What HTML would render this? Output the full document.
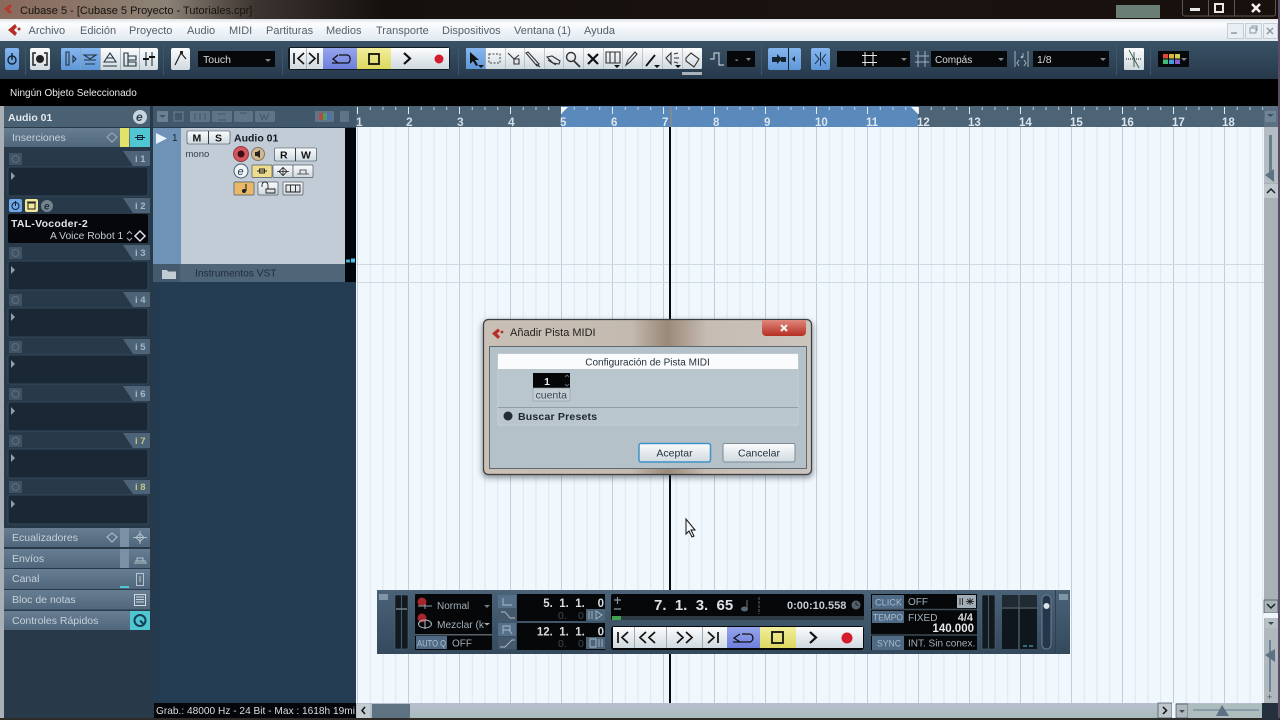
<!DOCTYPE html>
<html><head><meta charset="utf-8"><title>Cubase 5</title>
<style>
html,body{margin:0;padding:0;background:#000}
#p{position:relative;width:1280px;height:720px;overflow:hidden;background:#233c52;font-family:"Liberation Sans",sans-serif;filter:blur(.3px)}
#p>div{position:absolute}
#grid{left:356px;top:127px;width:908px;height:576px;background-color:#f0f7fd;
background-image:linear-gradient(90deg,#c2cdd7 1px,transparent 1px),linear-gradient(90deg,#dde6ed 1px,transparent 1px);
background-size:51px 100%,12.75px 100%;background-position:1px 0,1px 0}
#rul{left:356px;top:106px;width:908px;height:21px;background-color:#4d6376}
#rulsel{left:561px;top:106px;width:357px;height:21px;background:#5a8abb}
#ticks{left:356px;top:106px;width:908px;height:21px;
background-image:linear-gradient(90deg,#e4ebf0 1px,transparent 1px),linear-gradient(90deg,#c5d2dc 1px,transparent 1px);
background-size:51px 7px,12.75px 3px;background-repeat:repeat-x;background-position:1px 1px,1px 1px}
svg{position:absolute;left:0;top:0}
text{font-family:"Liberation Sans",sans-serif}
</style></head><body><div id="p">
<div id="grid"></div><div id="rul"></div><div id="rulsel"></div><div id="ticks"></div>
<svg width="1280" height="720" viewBox="0 0 1280 720">
<defs>
<linearGradient id="title" x1="0" x2="1" y1="0" y2="0"><stop offset="0" stop-color="#8a6a5c"/><stop offset=".13" stop-color="#8c8276"/><stop offset=".2" stop-color="#3c3430"/><stop offset=".3" stop-color="#15100e"/><stop offset=".7" stop-color="#1a120e"/><stop offset="1" stop-color="#17100d"/></linearGradient>
<linearGradient id="menu" x1="0" x2="0" y1="0" y2="1"><stop offset="0" stop-color="#dfe3e6"/><stop offset=".2" stop-color="#fdfdfe"/><stop offset="1" stop-color="#dfe8f0"/></linearGradient>
<linearGradient id="tb" x1="0" x2="0" y1="0" y2="1"><stop offset="0" stop-color="#3a5266"/><stop offset="1" stop-color="#26394b"/></linearGradient>
<linearGradient id="wb" x1="0" x2="0" y1="0" y2="1"><stop offset="0" stop-color="#fbfcfd"/><stop offset="1" stop-color="#cfd9df"/></linearGradient>
<linearGradient id="yb" x1="0" x2="0" y1="0" y2="1"><stop offset="0" stop-color="#f2ee9c"/><stop offset="1" stop-color="#dcd75e"/></linearGradient>
<linearGradient id="bb" x1="0" x2="0" y1="0" y2="1"><stop offset="0" stop-color="#96a5ec"/><stop offset="1" stop-color="#6d7fdc"/></linearGradient>
<linearGradient id="lb" x1="0" x2="0" y1="0" y2="1"><stop offset="0" stop-color="#86b6ee"/><stop offset="1" stop-color="#5f97d8"/></linearGradient>
<linearGradient id="row" x1="0" x2="0" y1="0" y2="1"><stop offset="0" stop-color="#667d92"/><stop offset="1" stop-color="#4f667b"/></linearGradient>
<linearGradient id="dlgt" x1="0" x2="1" y1="0" y2="0"><stop offset="0" stop-color="#c8bfb5"/><stop offset=".45" stop-color="#c4bab0"/><stop offset=".56" stop-color="#9a8977"/><stop offset=".68" stop-color="#c6bcb2"/><stop offset="1" stop-color="#cbc5be"/></linearGradient>
<linearGradient id="red" x1="0" x2="0" y1="0" y2="1"><stop offset="0" stop-color="#e0877c"/><stop offset="1" stop-color="#b52f22"/></linearGradient>
<linearGradient id="trans" x1="0" x2="0" y1="0" y2="1"><stop offset="0" stop-color="#4a6278"/><stop offset="1" stop-color="#34495c"/></linearGradient>
<linearGradient id="sb" x1="0" x2="0" y1="0" y2="1"><stop offset="0" stop-color="#b8bfce"/><stop offset="1" stop-color="#a9bcbc"/></linearGradient>
<filter id="sh" x="-10%" y="-10%" width="120%" height="120%"><feGaussianBlur stdDeviation="3"/></filter>
</defs>

<!-- title bar -->
<rect width="1280" height="19" fill="url(#title)"/>
<rect x="1116" y="5" width="44" height="13" fill="#7f9a90" opacity=".8"/>
<path d="M4 9l6-5 2 2-3 3 3 3-2 2z" fill="#b8382e"/>
<text x="20" y="14" font-size="11" fill="#16120f">Cubase 5 - [Cubase 5 Proyecto - Tutoriales.cpr]</text>
<rect x="1182.500" y="-2" width="93" height="18" rx="2" fill="none" stroke="#5c5550"/>
<path d="M1208.500 0v16M1234.500 0v16" stroke="#5c5550"/>
<rect x="1190" y="8" width="10" height="3" fill="#e8e8e8"/>
<rect x="1215" y="4" width="8" height="8" fill="none" stroke="#e8e8e8" stroke-width="2"/>
<path d="M1252 4l8 8M1260 4l-8 8" stroke="#eee" stroke-width="2.600"/>

<!-- menu -->
<rect y="19" width="1280" height="22" fill="url(#menu)"/>
<path d="M8 30l7-6 2 3-3 3 3 3-2 3z" fill="#b52e2a"/><circle cx="19" cy="29" r="1.500" fill="#b52e2a"/>
<g font-size="11" fill="#55616b">
<text x="28.500" y="34">Archivo</text><text x="80" y="34">Edición</text><text x="129" y="34">Proyecto</text><text x="187" y="34">Audio</text><text x="229" y="34">MIDI</text><text x="266" y="34">Partituras</text><text x="326" y="34">Medios</text><text x="376" y="34">Transporte</text><text x="442" y="34">Dispositivos</text><text x="514" y="34">Ventana (1)</text><text x="584" y="34">Ayuda</text></g>
<g fill="#e9eff3" stroke="#c4ced6"><rect x="1227.500" y="23.500" width="16" height="15"/><rect x="1245.500" y="23.500" width="16" height="15"/><rect x="1263.500" y="23.500" width="14" height="15"/></g>
<path d="M1231 33h6" stroke="#8a99a5" stroke-width="1.500"/><path d="M1250 28h6v5h-6zM1252 28v-2h5v5" fill="none" stroke="#8a99a5"/><path d="M1267 28l6 6M1273 28l-6 6" stroke="#8a99a5" stroke-width="1.500"/>

<!-- toolbar -->
<rect y="41" width="1280" height="38" fill="url(#tb)"/>
<rect y="79" width="1280" height="27" fill="#000"/>
<text x="10" y="96" font-size="10" fill="#e8e8e8">Ningún Objeto Seleccionado</text>
<path d="M25.500 45v30M163.500 45v30M282.500 45v30M458.500 45v30M761.500 45v30M1116.500 45v30M1150.500 45v30" stroke="#3f566a"/>
<rect x="5" y="48" width="14" height="22" rx="2" fill="url(#lb)"/><circle cx="12" cy="60" r="4" fill="none" stroke="#123" stroke-width="1.400"/><path d="M12 53v7" stroke="#123" stroke-width="1.400"/>
<rect x="30" y="48" width="20" height="22" rx="2" fill="url(#wb)"/><path d="M36 53h-3v12h3M44 53h3v12h-3" fill="none" stroke="#222" stroke-width="1.500"/><circle cx="40" cy="59" r="4" fill="#222"/>
<rect x="61" y="48" width="97" height="22" rx="2" fill="url(#wb)"/><path d="M61 50a2 2 0 0 1 2-2h37v22H63a2 2 0 0 1-2-2z" fill="url(#lb)"/>
<path d="M80.500 48v22M120.500 48v22M139.500 48v22M100.500 48v22" stroke="#8ea2b2" opacity=".7"/>
<g fill="none" stroke="#24333f" stroke-width="1.100"><path d="M66 52h3v13h-3zM73 56l3 3-3 3z"/><path d="M84 55h12l-6 4zM84 60h12M85 64h10"/><path d="M104 62l6-9 6 9zM103 66h14M106 58h8"/><path d="M124 53h4v13h-4zM128 56h8v4h-8zM128 62h8v4h-8z"/><path d="M146 52v14M152 52v14"/></g><path d="M143 59h6M149 57h6" stroke="#111" stroke-width="2"/>
<rect x="171" y="48" width="19" height="22" rx="2" fill="url(#wb)"/><path d="M175 65l6-12 5 6" fill="none" stroke="#222" stroke-width="1.200"/><rect x="180" y="51" width="3" height="3" fill="#222"/>
<rect x="198" y="51" width="77" height="16" fill="#06080a"/><text x="203" y="63" font-size="10.500" fill="#d5dadd">Touch</text><path d="M265 59h6l-3 3z" fill="#7b8790"/>
<!-- transport group -->
<rect x="288" y="47" width="162" height="23" rx="3" fill="#101a22"/>
<rect x="290" y="48" width="33" height="21" fill="url(#wb)"/><rect x="323" y="48" width="34" height="21" fill="url(#bb)"/><rect x="357" y="48" width="34" height="21" fill="url(#yb)"/><rect x="391" y="48" width="34" height="21" fill="url(#wb)"/><rect x="425" y="48" width="24" height="21" fill="url(#wb)"/>
<path d="M306.500 48v21" stroke="#aab6bf"/>
<path d="M294 53v11M304 53l-6 5.500 6 5.500M309 53l6 5.500-6 5.500M318 53v11" fill="none" stroke="#111" stroke-width="1.600"/>
<path d="M332 63h16c3-1 3-8-1-8h-8M338 55l-5 4 5 4" fill="none" stroke="#111" stroke-width="1.300"/>
<rect x="369" y="54" width="10" height="10" fill="none" stroke="#111" stroke-width="1.800"/>
<path d="M404 53l6 5.500-6 5.500" fill="none" stroke="#111" stroke-width="2.200"/>
<circle cx="439" cy="59" r="4.500" fill="#d51c2e"/>
<!-- tools -->
<rect x="466" y="48" width="236" height="21" rx="1" fill="url(#wb)"/><rect x="466" y="48" width="20" height="21" fill="url(#lb)"/>
<path d="M485.500 48v21M505.500 48v21M524.500 48v21M544.500 48v21M563.500 48v21M583.500 48v21M603.500 48v21M622.500 48v21M642.500 48v21M662.500 48v21M682.500 48v21" stroke="#a9b6c0" opacity=".7"/>
<path d="M470 52v12l3-3 3 5 2-1-3-5h4z" fill="#111"/><path d="M478 65h6l-3 3z" fill="#111"/>
<rect x="489" y="54" width="11" height="9" fill="none" stroke="#444" stroke-dasharray="2 1.500"/>
<g fill="none" stroke="#333" stroke-width="1.100"><path d="M508 53l6 6M514 59h5v5h-5zM519 55l-5 4"/><path d="M526 53l11 13 2-2-11-12zM536 64l4 3"/><path d="M547 57l5-1 8 5-1 3-6-1zM548 60l8 5"/><circle cx="571" cy="57" r="4.500" stroke-width="1.400"/><path d="M574 61l6 6" stroke-width="1.800"/><path d="M606 52h14v11h-14zM610 52v11M615 52v11"/><path d="M626 65l2-5 7-8 2 2-7 8z"/><path d="M666 58l5-5v11zM674 54l4-1M674 58h5M674 62l4 1"/><path d="M686 58l5-5 8 6-5 8-8-6z"/></g>
<path d="M588 54l10 10M598 54l-10 10" stroke="#111" stroke-width="2.200"/>
<path d="M646 66l9-11" stroke="#111" stroke-width="1.800"/><path d="M654 65h6l-3 3zM675 65h6l-3 3zM614 65h6l-3 3z" fill="#111"/>
<rect x="682" y="72" width="20" height="3" fill="#aab3ba"/>
<path d="M710 59h4v-6h5v12h5" fill="none" stroke="#b9c6d0" stroke-width="1.200"/>
<rect x="727" y="51" width="28" height="16" fill="#06080a"/><text x="735" y="63" font-size="10" fill="#ddd">-</text><path d="M746 58h5l-2.500 3z" fill="#7b8790"/>
<rect x="768" y="48" width="33" height="22" rx="2" fill="url(#lb)"/><path d="M788.500 48v22" stroke="#122"/>
<path d="M772 57h5v5h-5zM777 54l5 5-5 5zM781 57h5v5h-5zM795 56l-3 3 3 3z" fill="#16242f"/>
<rect x="811" y="48" width="19" height="22" rx="2" fill="url(#lb)"/><path d="M815 54l4 5-4 5M826 54l-4 5 4 5M820.500 52v14" fill="none" stroke="#1a2f40" stroke-width="1"/>
<rect x="837" y="51" width="73" height="16" fill="#06080a"/><path d="M865 52v14M873 52v14M862 55.500h15M862 62.500h15" stroke="#e4e4e4" stroke-width="1.100"/><path d="M901 58h6l-3 3z" fill="#7b8790"/>
<path d="M918 51v16M925 51v16M915 56h14M915 62h14" stroke="#9fb0bd"/>
<rect x="931" y="51" width="76" height="16" fill="#06080a"/><text x="935" y="63" font-size="10" fill="#d5dadd">Compás</text><path d="M998 58h6l-3 3z" fill="#7b8790"/>
<path d="M1015 51v16M1028 51v16M1019 60l-2 3 2 3M1024 60l2 3-2 3M1023 53v4" fill="none" stroke="#9fb0bd"/><circle cx="1022" cy="57" r="1.300" fill="#9fb0bd"/>
<rect x="1033" y="51" width="76" height="16" fill="#06080a"/><text x="1037" y="63" font-size="10.500" fill="#d5dadd">1/8</text><path d="M1100 58h6l-3 3z" fill="#7b8790"/>
<rect x="1124" y="48" width="20" height="22" rx="1" fill="url(#wb)"/><path d="M1129 50l10 18M1134 52v15" stroke="#465" fill="none"/><path d="M1126 59h16" stroke="#111" stroke-dasharray="1 1"/>
<rect x="1158" y="51" width="31" height="16" fill="#06080a"/>
<rect x="1163" y="54" width="5" height="4.500" fill="#e0493a"/><rect x="1169" y="54" width="5" height="4.500" fill="#e2b13a"/><rect x="1175" y="54" width="5" height="4.500" fill="#cfd24a"/><rect x="1163" y="59.500" width="5" height="4.500" fill="#3ec07a"/><rect x="1169" y="59.500" width="5" height="4.500" fill="#3f9fdc"/><rect x="1175" y="59.500" width="5" height="4.500" fill="#8a5fd0"/><path d="M1181 58h6l-3 3z" fill="#7b8790"/>

<!-- inspector -->
<rect x="0" y="106" width="4" height="614" fill="#a8b0b5"/>
<rect x="4" y="106" width="150" height="614" fill="#283a4a"/>
<rect x="4" y="106" width="146" height="21" fill="#4a6073"/>
<text x="8" y="121" font-size="10.500" font-weight="bold" fill="#e4eaee">Audio 01</text>
<circle cx="140" cy="117" r="7" fill="#c8d4de"/><text x="136" y="121" font-size="12" font-style="italic" font-weight="bold" fill="#2f4558">e</text>
<rect x="4" y="128" width="146" height="19" fill="url(#row)"/><rect x="120" y="128" width="9" height="19" fill="#e3e36a"/><rect x="130" y="128" width="20" height="19" fill="#4fc6d2"/>
<text x="12" y="141" font-size="10.500" fill="#c6d2dc">Inserciones</text>
<path d="M107 137l5-4 5 4-5 5z" fill="none" stroke="#9fb0be"/><path d="M135 137.500h10M137.500 135.500h5v4h-5z" fill="none" stroke="#123" stroke-width=".9"/>

<!-- slots -->
<g stroke="#34495c">
<rect x="8" y="167" width="140" height="29" rx="2" fill="#1a2836"/>
<rect x="8" y="261" width="140" height="29" rx="2" fill="#1a2836"/>
<rect x="8" y="308" width="140" height="29" rx="2" fill="#1a2836"/>
<rect x="8" y="355" width="140" height="29" rx="2" fill="#1a2836"/>
<rect x="8" y="402" width="140" height="29" rx="2" fill="#1a2836"/>
<rect x="8" y="449" width="140" height="29" rx="2" fill="#1a2836"/>
<rect x="8" y="495" width="140" height="29" rx="2" fill="#1a2836"/>
</g>
<rect x="8" y="214" width="140" height="29" rx="2" fill="#05070a"/>
<g fill="#4d6377">
<path d="M123 151h27v15h-17zM123 198h27v15h-17zM123 245h27v15h-17zM123 292h27v15h-17zM123 339h27v15h-17zM123 386h27v15h-17zM123 433h27v15h-17zM123 480h27v14h-17z"/></g>
<g fill="#3f5364">
<rect x="9" y="153" width="13" height="12"/><rect x="9" y="247" width="13" height="12"/><rect x="9" y="294" width="13" height="12"/><rect x="9" y="341" width="13" height="12"/><rect x="9" y="388" width="13" height="12"/><rect x="9" y="435" width="13" height="12"/><rect x="9" y="481" width="13" height="12"/></g>
<g fill="none" stroke="#5c7082"><circle cx="15.500" cy="159" r="3.500"/><circle cx="15.500" cy="253" r="3.500"/><circle cx="15.500" cy="300" r="3.500"/><circle cx="15.500" cy="347" r="3.500"/><circle cx="15.500" cy="394" r="3.500"/><circle cx="15.500" cy="441" r="3.500"/><circle cx="15.500" cy="487" r="3.500"/></g>
<path d="M11 172l4 4-4 4zM11 266l4 4-4 4zM11 313l4 4-4 4zM11 360l4 4-4 4zM11 407l4 4-4 4zM11 454l4 4-4 4zM11 500l4 4-4 4z" fill="#8ea0ae"/>
<g font-size="9.500" font-weight="bold" fill="#a7b8c5"><text x="135" y="162">i 1</text><text x="135" y="209">i 2</text><text x="135" y="256">i 3</text><text x="135" y="303">i 4</text><text x="135" y="350">i 5</text><text x="135" y="397">i 6</text></g>
<g font-size="9.500" font-weight="bold" fill="#c4c67e"><text x="135" y="444">i 7</text><text x="135" y="490">i 8</text></g>
<rect x="9" y="199" width="13" height="13" rx="2" fill="#6fa6e8"/><circle cx="15.500" cy="206" r="3.500" fill="none" stroke="#123"/><path d="M15.500 201v5" stroke="#123"/>
<rect x="25" y="199" width="13" height="13" rx="2" fill="#efe79a"/><path d="M28 203h7v6h-7zM27 202h9" fill="none" stroke="#222"/>
<circle cx="47" cy="206" r="6" fill="#74848f"/><text x="44" y="209.500" font-size="10" font-style="italic" font-weight="bold" fill="#22313d">e</text>
<text x="11" y="227" font-size="10.500" font-weight="bold" letter-spacing=".25" fill="#dfe5e9">TAL-Vocoder-2</text>
<text x="50" y="239" font-size="10.300" fill="#c4ccd3">A Voice Robot 1</text>
<path d="M127 234l2.500-2.500 2.500 2.500M127 238l2.500 2.500 2.500-2.500" fill="none" stroke="#aab"/><path d="M140 231l5 5-5 5-5-5z" fill="none" stroke="#dde" stroke-width="1.500"/>

<!-- bottom sections -->
<g font-size="10.500" fill="#c6d2dc">
<rect x="4" y="528" width="146" height="19" fill="url(#row)"/><rect x="120" y="528" width="9" height="19" fill="#7b90a4"/><text x="12" y="541">Ecualizadores</text>
<rect x="4" y="549" width="146" height="19" fill="url(#row)"/><rect x="120" y="549" width="9" height="19" fill="#7b90a4"/><text x="12" y="562">Envíos</text>
<rect x="4" y="569" width="146" height="20" fill="url(#row)"/><rect x="120" y="586" width="9" height="2" fill="#4fc6d2"/><text x="12" y="582">Canal</text>
<rect x="4" y="590" width="146" height="19.500" fill="url(#row)"/><text x="12" y="603">Bloc de notas</text>
<rect x="4" y="611" width="146" height="19" fill="url(#row)"/><rect x="130" y="611" width="20" height="19" fill="#4fc6d2"/><text x="12" y="624">Controles Rápidos</text>
</g>
<path d="M107 537l5-4 5 4-5 5z" fill="none" stroke="#b6c4cf"/><path d="M136 537.500l4-4 4 4-4 4zM140 531v13M133 537.500h14" fill="none" stroke="#b6c4cf" stroke-width=".9"/>
<path d="M135 561h11M137 561v-3h6v3M134 563h13" fill="none" stroke="#b6c4cf"/>
<rect x="136.500" y="573.500" width="7" height="12" fill="none" stroke="#b6c4cf"/><path d="M140 576v6" stroke="#b6c4cf"/>
<rect x="134.500" y="594.500" width="11" height="11" fill="none" stroke="#cdd8e0"/><path d="M136 597h8M136 599.500h8M136 602h8" stroke="#cdd8e0"/>
<circle cx="140" cy="620.500" r="5.500" fill="none" stroke="#173f55" stroke-width="2"/><path d="M140 620.500l4 4" stroke="#173f55" stroke-width="2"/>

<!-- track list -->
<rect x="154" y="127" width="202" height="576" fill="#233c52"/>
<rect x="153" y="106" width="203" height="21" fill="#41586b"/>
<rect x="157" y="111" width="11" height="11" rx="1" fill="#6d8192"/><path d="M159 115h7l-3.500 3z" fill="#41586b"/>
<rect x="174" y="112" width="9" height="9" fill="none" stroke="#6d8192"/>
<g fill="#5f7486"><rect x="190" y="111" width="20" height="11" rx="1"/><rect x="212" y="111" width="20" height="11" rx="1"/><rect x="234" y="111" width="19" height="11" rx="1"/><rect x="255" y="111" width="20" height="11" rx="1"/><rect x="315" y="111" width="19" height="11" rx="1"/><rect x="340" y="111" width="9" height="11" rx="1"/></g>
<path d="M195 120v-7M205 120v-7M200 113v7M218 114h8M218 120h8M240 113h7M260 113l2 7 2-5 2 5 3-7" stroke="#41586b" fill="none"/>
<rect x="319" y="113" width="4" height="7" fill="#b14c44"/><rect x="323" y="113" width="4" height="7" fill="#4e9a63"/><rect x="327" y="113" width="4" height="7" fill="#4a70b5"/>
<rect x="153" y="128" width="28" height="136" fill="#6f93b7"/><rect x="181" y="128" width="164" height="136" fill="#c1ccd6"/>
<rect x="345" y="128" width="11" height="154" fill="#03060a"/>
<rect x="346" y="259.500" width="4" height="3" fill="#3fb0d0"/><rect x="351" y="258.500" width="4" height="4" fill="#45c6e0"/>
<path d="M156 133l11 5.500-11 5.500z" fill="#e8f2fb"/><text x="172" y="141" font-size="10" fill="#142634">1</text>
<rect x="187" y="131" width="43" height="13" rx="1.500" fill="url(#wb)" stroke="#33424f" stroke-width=".6"/><path d="M208.500 131v13" stroke="#33424f"/>
<text x="192.500" y="141.500" font-size="10.500" font-weight="bold" fill="#111">M</text><text x="215" y="141.500" font-size="10.500" font-weight="bold" fill="#111">S</text>
<text x="234" y="141.500" font-size="10.500" font-weight="bold" fill="#101a22">Audio 01</text>
<text x="185.500" y="157" font-size="9.500" fill="#2f3f4b">mono</text>
<circle cx="241" cy="154" r="7.500" fill="#d9555e" stroke="#8d3c40"/><circle cx="241" cy="154" r="3.500" fill="#3a1014"/>
<circle cx="258" cy="154" r="6.500" fill="#d2b98f" stroke="#83765f"/><path d="M255 152h2l3-2v8l-3-2h-2z" fill="#222"/>
<rect x="274.500" y="148" width="42" height="13" rx="1.500" fill="url(#wb)" stroke="#33424f" stroke-width=".6"/><path d="M295.500 148v13" stroke="#33424f"/>
<text x="280" y="158.500" font-size="10.500" font-weight="bold" fill="#111">R</text><text x="301" y="158.500" font-size="10.500" font-weight="bold" fill="#111">W</text>
<circle cx="241" cy="171" r="7" fill="#eef3f6" stroke="#47596a"/><text x="237.500" y="175" font-size="11" font-style="italic" fill="#1f3344">e</text>
<rect x="252" y="165" width="20" height="12.500" rx="1" fill="#efdd8f" stroke="#4e5a63" stroke-width=".7"/><path d="M257 171h10M259.500 169h5v4h-5z" fill="none" stroke="#222" stroke-width=".9"/>
<rect x="273" y="165" width="20" height="12.500" rx="1" fill="url(#wb)" stroke="#4e5a63" stroke-width=".7"/><path d="M283 167v9M279 171.500l4-4 4 4-4 4zM277 171.500h12" fill="none" stroke="#222" stroke-width=".8"/>
<rect x="293" y="165" width="20" height="12.500" rx="1" fill="url(#wb)" stroke="#4e5a63" stroke-width=".7"/><path d="M297 174h12M300 174v-4h6v4" fill="none" stroke="#333" stroke-width=".8"/>
<rect x="234" y="182" width="20" height="13" rx="1" fill="#e9b967" stroke="#4e5a63" stroke-width=".7"/><path d="M246 184v7" stroke="#222" stroke-width="1.100"/><circle cx="244" cy="191" r="2" fill="#222"/>
<rect x="258" y="182" width="20" height="13" rx="1" fill="url(#wb)" stroke="#4e5a63" stroke-width=".7"/><path d="M266 189h9v4h-9zM262 187v-2a3 3 0 0 1 6 0v4" fill="none" stroke="#222" stroke-width=".9"/>
<rect x="283" y="182" width="20" height="13" rx="1" fill="url(#wb)" stroke="#4e5a63" stroke-width=".7"/><path d="M286 185h14v7h-14zM290.500 185v7M295.500 185v7" fill="none" stroke="#222" stroke-width=".9"/>
<rect x="153" y="264" width="192" height="18" fill="#4f6578"/><rect x="153" y="264" width="27" height="18" fill="#455a6d"/>
<path d="M162 270h5l1 1.500h8V279h-14z" fill="#c2ccd4"/>
<text x="195" y="276.500" font-size="10.200" fill="#1f2e3a">Instrumentos VST</text>

<!-- ruler text -->
<g font-size="12" font-weight="bold" fill="#cfdbe5">
<text x="356" y="126">1</text><text x="406" y="126">2</text><text x="457" y="126">3</text><text x="508" y="126">4</text></g>
<g font-size="11.500" font-weight="bold" fill="#dbe6ef">
<text x="560" y="126">5</text><text x="611" y="126">6</text><text x="662" y="126">7</text><text x="713" y="126">8</text><text x="764" y="126">9</text><text x="815" y="126">10</text><text x="866" y="126">11</text><text x="917" y="126">12</text><text x="968" y="126">13</text><text x="1019" y="126">14</text><text x="1070" y="126">15</text><text x="1121" y="126">16</text><text x="1172" y="126">17</text><text x="1222" y="126">18</text></g>
<path d="M561 107h7l-7 7zM918 107h-7l7 7z" fill="#f4f7fa"/>
<rect x="1264" y="106" width="14" height="21" fill="#5b7083"/><rect x="1265" y="111" width="11" height="11" fill="#6f8496"/><path d="M1267 114h7l-3.500 3z" fill="#3d5162"/>

<!-- horizontal grid -->
<path d="M356 264.500h908M356 282.500h908" stroke="#d0dae2"/>
<!-- cursor -->
<rect x="669" y="127" width="2" height="576" fill="#060a0d"/>
<rect x="670" y="106" width="2" height="21" fill="#7f8a94"/>

<!-- right scroll -->
<rect x="1264" y="127" width="14" height="576" fill="#a8b1b6"/>
<rect x="1264" y="127" width="14" height="56" fill="#b2bcc2"/>
<path d="M1270.500 135v40" stroke="#6c7e8c" stroke-width="3"/><path d="M1265 175l9-6v13z" fill="#5d7182"/>
<rect x="1264" y="184" width="14" height="14" fill="#bec7cc"/><path d="M1267 193l4-4 4 4" fill="none" stroke="#16222c" stroke-width="1.500"/>
<rect x="1264" y="600" width="14" height="13" fill="#aab3b8" stroke="#2a3a47" stroke-width=".6"/><path d="M1267 604l4 4 4-4" fill="none" stroke="#16222c" stroke-width="1.500"/>
<rect x="1264" y="613" width="14" height="5" fill="#eef5fb"/>
<rect x="1264" y="618" width="14" height="85" fill="#aeb8bd"/><rect x="1265" y="618" width="12" height="10" fill="#b7c1c6"/><path d="M1268 622h6l-3 3z" fill="#3a4c5a"/>
<path d="M1270 640v52" stroke="#6f8392" stroke-width="2"/><path d="M1265 655l10-6v13z" fill="#5d7182"/>
<text x="1267" y="700" font-size="9" fill="#46596a">+</text>
<rect x="1278" y="0" width="2" height="720" fill="#5b4c66"/>

<!-- bottom bar -->
<rect x="356" y="703" width="908" height="15" fill="url(#sb)"/>
<rect y="718" width="1280" height="2" fill="#2e2a26"/>
<rect x="154" y="703" width="202" height="15" fill="#04060a"/>
<text x="156" y="714" font-size="10.500" fill="#d8dde0" textLength="199" lengthAdjust="spacingAndGlyphs">Grab.: 48000 Hz - 24 Bit - Max : 1618h 19mi</text>
<rect x="357" y="704" width="13" height="14" fill="#c2ccd1"/><path d="M365 707l-3 3.500 3 3.500" fill="none" stroke="#111" stroke-width="1.500"/>
<rect x="372" y="704" width="38" height="14" fill="#5e7282"/>
<rect x="1158" y="703" width="14" height="15" fill="#bcc6cb" stroke="#2a3a47" stroke-width=".6"/><path d="M1163 707l3.500 3.500-3.500 3.500" fill="none" stroke="#111" stroke-width="1.500"/>
<rect x="1172" y="703" width="4" height="15" fill="#f0f7fd"/>
<rect x="1176" y="704" width="12" height="14" fill="#aeb8bd" stroke="#2a3a47" stroke-width=".6"/><path d="M1179 710h6l-3 3z" fill="#3a4c5a"/>
<rect x="1188" y="704" width="74" height="14" fill="#adbcbc"/><path d="M1193 710h66" stroke="#8a9ba8" stroke-width="2"/><path d="M1216 716l6-11 7 11z" fill="#5d7182"/>
<rect x="1262" y="703" width="16" height="17" fill="#24313c"/>

<!-- dialog -->
<rect x="482" y="321" width="331" height="157" rx="6" fill="#25313a" opacity=".5" filter="url(#sh)"/>
<rect x="483.500" y="319.500" width="328" height="155" rx="5" fill="url(#dlgt)" stroke="#3d3e40" stroke-width="1.200"/>
<path d="M492 333.500l6-5 2 2.500-3 2.500 3 3-2 2.500z" fill="#b52e2a"/><circle cx="502" cy="332" r="1.400" fill="#b52e2a"/>
<text x="510" y="336" font-size="11" fill="#24221f">Añadir Pista MIDI</text>
<path d="M762 320h44v12a4 4 0 0 1-4 4h-36a4 4 0 0 1-4-4z" fill="url(#red)"/>
<path d="M781 325l6 6M787 325l-6 6" stroke="#f4f0ee" stroke-width="2.200"/>
<rect x="489.500" y="346.500" width="317" height="122" fill="#b4c1c8" stroke="#5e6a72"/>
<rect x="498" y="354" width="300" height="71" fill="#b9c6cd" stroke="#c5d0d6"/>
<rect x="498" y="354" width="300" height="15" fill="#f9fbfc"/>
<text x="647.500" y="365.500" font-size="10" text-anchor="middle" fill="#26323a">Configuración de Pista MIDI</text>
<rect x="533" y="373" width="37" height="15" fill="#040608"/><text x="547" y="385" font-size="10.500" font-weight="bold" fill="#eee" text-anchor="middle">1</text>
<path d="M565 377l2-2 2 2M565 384l2 2 2-2" stroke="#667" fill="none"/>
<rect x="533" y="388" width="37" height="13" fill="#c2ccd2" stroke="#8e9ca5" stroke-width=".6"/>
<text x="535.500" y="398.500" font-size="10.500" fill="#3a4a55">cuenta</text>
<path d="M498 407.500h300" stroke="#8f9da6"/>
<circle cx="508" cy="416" r="4.500" fill="#222d36"/>
<text x="518" y="420" font-size="10.500" font-weight="bold" letter-spacing=".2" fill="#1c2630">Buscar Presets</text>
<rect x="639" y="443.500" width="71.500" height="18.500" rx="2" fill="url(#wb)" stroke="#3f92c8" stroke-width="1.500"/>
<rect x="723" y="443.500" width="72" height="18.500" rx="2" fill="url(#wb)" stroke="#7f8a92"/>
<text x="674.500" y="456.500" font-size="10.500" text-anchor="middle" fill="#27333c">Aceptar</text>
<text x="759" y="456.500" font-size="10.500" text-anchor="middle" fill="#27333c">Cancelar</text>

<!-- transport panel -->
<rect x="377" y="590" width="693" height="64" fill="url(#trans)"/>
<rect x="379" y="594" width="9" height="6" fill="#7f96a8"/><rect x="1059" y="594" width="9" height="6" fill="#7f96a8"/>
<rect x="395" y="595" width="13" height="54" rx="1" fill="#12191f" stroke="#566b7d" stroke-width=".5"/><path d="M401.500 595v54" stroke="#465a6a"/><path d="M396 609h11" stroke="#6d7f8e" stroke-width="1.500"/>
<rect x="415" y="594" width="77" height="56" rx="1" fill="#050709"/>
<circle cx="422" cy="602" r="4.500" fill="#a7262e"/><path d="M418 606h14M425 604v5" stroke="#8f9ca6"/>
<text x="437" y="609" font-size="10" fill="#a4b0b9">Normal</text><path d="M484 605h6l-3 3z" fill="#707c85"/>
<circle cx="422" cy="618" r="4.500" fill="#a7262e"/><ellipse cx="425" cy="624" rx="6.500" ry="4" fill="none" stroke="#b0bcc5"/><path d="M425 620v9" stroke="#b0bcc5"/>
<text x="437" y="628" font-size="10.200" fill="#a4b0b9">Mezclar (k</text><path d="M484 623h6l-3 2.500z" fill="#a4b0b9"/>
<rect x="415" y="634" width="77" height="1.500" fill="#56636d"/>
<rect x="416" y="636" width="31" height="13" fill="#4f6a85"/><text x="417" y="646.500" font-size="9.500" fill="#b0c0ce" textLength="29" lengthAdjust="spacingAndGlyphs">AUTO Q</text>
<text x="452" y="646.500" font-size="10" fill="#a4b0b9">OFF</text>
<rect x="498" y="595" width="18" height="13" fill="#55708a"/><rect x="498" y="609" width="18" height="13" fill="#44596c"/><rect x="498" y="623" width="18" height="13" fill="#55708a"/><rect x="498" y="637" width="18" height="12" fill="#44596c"/>
<path d="M503 598v7h9M501 612h4l5 6h5M503 634v-8h7v4h-7M509 630l3 4M500 647h5l7-7h3" fill="none" stroke="#aebdca" stroke-width=".9"/>
<rect x="517" y="594" width="88" height="27" fill="#050709"/><rect x="517" y="623" width="88" height="27" fill="#050709"/>
<text x="604" y="607" font-size="11.500" font-weight="bold" text-anchor="end" fill="#d8dde1" xml:space="preserve">5.  1.  1.    0</text>
<text x="604" y="635.500" font-size="11.500" font-weight="bold" text-anchor="end" fill="#d8dde1" xml:space="preserve">12.  1.  1.    0</text>
<text x="558" y="619" font-size="10.500" fill="#3e4a53">0.</text><text x="578" y="619" font-size="10.500" fill="#3e4a53">0</text>
<text x="558" y="647" font-size="10.500" fill="#3e4a53">0.</text><text x="578" y="647" font-size="10.500" fill="#3e4a53">0</text>
<rect x="586" y="609" width="19" height="12" fill="#4c6478"/><rect x="586" y="637" width="19" height="12" fill="#4c6478"/>
<path d="M589 611v8M592 611v8M596 611l6 4-6 4zM590 639h6v8h-6zM599 639v8M602 639v8" fill="none" stroke="#a8bac8" stroke-width=".9"/>
<rect x="611" y="594" width="253" height="26" rx="2" fill="#050709"/>
<path d="M614 600h7M617.500 597v7M614 609h7" stroke="#8a98a3" stroke-width="1.200"/>
<rect x="612" y="616" width="252" height="4" fill="#2e3a44"/><rect x="612" y="616" width="9" height="4" fill="#3fa24d"/>
<text x="654" y="610" font-size="15" font-weight="bold" fill="#dde2e6" xml:space="preserve">7.  1.  3.  65</text>
<path d="M747 600v9" stroke="#5a6670" stroke-width="1.200"/><ellipse cx="744.500" cy="609" rx="3.500" ry="2.500" fill="#5a6670"/>
<path d="M759 597v17" stroke="#5a6670" stroke-dasharray="3 1"/>
<text x="787" y="609" font-size="11" font-weight="bold" fill="#c4ccd2">0:00:10.558</text>
<circle cx="856" cy="605" r="4.500" fill="#52626f"/><path d="M856 602v3h3" stroke="#222" fill="none"/>
<rect x="611" y="626" width="253" height="24" rx="3" fill="#050709"/>
<rect x="613" y="627" width="114" height="21" fill="url(#wb)"/><rect x="727" y="627" width="33" height="21" fill="url(#bb)"/><rect x="760" y="627" width="36" height="21" fill="url(#yb)"/><rect x="796" y="627" width="34" height="21" fill="url(#wb)"/><rect x="830" y="627" width="33" height="21" fill="url(#wb)"/>
<path d="M634.500 627v21M666.500 627v21M702.500 627v21" stroke="#9eaab3"/>
<path d="M618 632v11M628 632l-6 5.500 6 5.500M646 632l-6 5.500 6 5.500M655 632l-6 5.500 6 5.500M677 632l6 5.500-6 5.500M686 632l6 5.500-6 5.500M708 632l6 5.500-6 5.500M718 632v11" fill="none" stroke="#111" stroke-width="1.700"/>
<path d="M733 642h17c4-1 4-8-1-8h-7M740 634l-6 4 6 4" fill="none" stroke="#111" stroke-width="1.300"/>
<rect x="772" y="632" width="11" height="11" fill="none" stroke="#111" stroke-width="1.800"/>
<path d="M810 632l6 5.500-6 5.500" fill="none" stroke="#111" stroke-width="2.200"/>
<circle cx="847" cy="638" r="5.500" fill="#d51c2e"/>
<rect x="871" y="594" width="106" height="56" fill="#050709"/>
<g fill="#4f6a85"><rect x="872" y="595" width="32" height="14"/><rect x="872" y="611" width="32" height="12"/><rect x="872" y="636" width="32" height="14"/></g>
<path d="M871 609.500h106M871 635h106" stroke="#3f4c56" stroke-width="1.500"/>
<g font-size="9.500" fill="#a9bdce"><text x="875" y="605.500" textLength="27" lengthAdjust="spacingAndGlyphs">CLICK</text><text x="873" y="620.500" textLength="30" lengthAdjust="spacingAndGlyphs">TEMPO</text><text x="877" y="646.500" textLength="24" lengthAdjust="spacingAndGlyphs">SYNC</text></g>
<g font-size="10" fill="#a4b0b9"><text x="908" y="605">OFF</text><text x="908" y="621">FIXED</text><text x="908" y="646.500">INT. Sin conex.</text></g>
<rect x="957" y="595" width="19" height="13" fill="#a3adb5"/><path d="M960 598v7M962.500 598v7M966 601.500h8M970 598v7M967 599l6 5M973 599l-6 5" stroke="#111" stroke-width=".8"/>
<text x="973" y="621" font-size="11" font-weight="bold" text-anchor="end" fill="#d8dde1">4/4</text>
<text x="974" y="632" font-size="11.500" font-weight="bold" text-anchor="end" fill="#e4e8eb">140.000</text>
<rect x="982" y="595" width="13" height="54" rx="1" fill="#12191f" stroke="#566b7d" stroke-width=".5"/><path d="M988.500 595v54" stroke="#465a6a"/>
<rect x="1002" y="595" width="35" height="54" fill="#0f161c"/><path d="M1019 595v54M1002 608h35" stroke="#4a5a67" stroke-width="1.500"/><rect x="1002" y="595" width="16" height="12" fill="#1f2a33"/><rect x="1020" y="595" width="17" height="12" fill="#1f2a33"/>
<path d="M1023 646h4M1029 646h4" stroke="#4fc6d2"/>
<rect x="1042" y="595" width="9" height="54" rx="4.500" fill="#24364a" stroke="#6d8192"/><circle cx="1046.500" cy="606" r="3" fill="#dbe4ea"/>
<path d="M1055.500 590v64" stroke="#2e4152"/>

<!-- mouse pointer -->
<path d="M686 519v15l3-3 3 6 2-1-3-6h4z" fill="#f4f7f9" stroke="#111" stroke-width="1"/>
</svg>
</div></body></html>
